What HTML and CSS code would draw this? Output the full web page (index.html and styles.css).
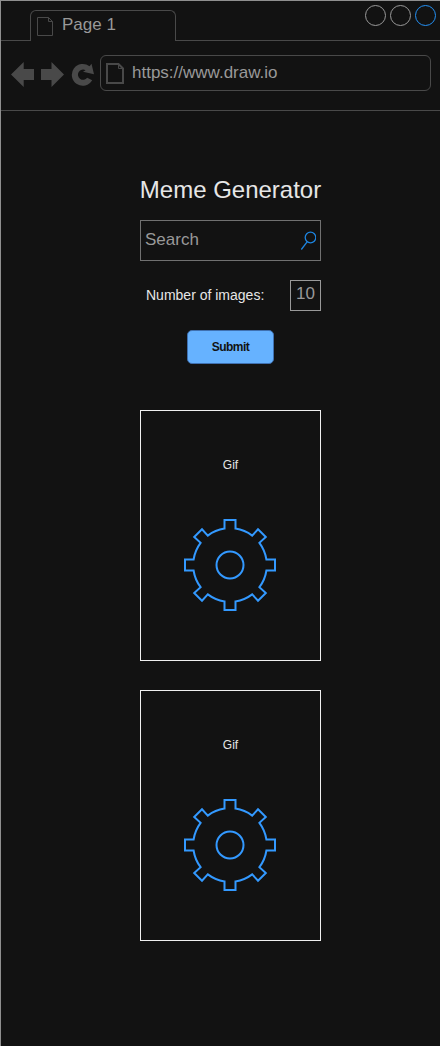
FILE: index.html
```html
<!DOCTYPE html>
<html lang="en">
<head>
<meta charset="utf-8">
<title>Meme Generator</title>
<link rel="stylesheet" href="styles.css">
</head>
<body>
<svg class="defs" width="0" height="0">
  <symbol id="gear" viewBox="-46 -46 93 93">
    <path d="M-5.5-36.4V-45H5.5V-36.4A36.8 36.8 0 0 1 22.2-29.4L28-35.7 35.8-28 29.4-22.2A36.8 36.8 0 0 1 36.4-5.5H45V5.5H36.4A36.8 36.8 0 0 1 29.4 22.2L35.8 28 28 35.7 22.2 29.4A36.8 36.8 0 0 1 5.5 36.4V45H-5.5V36.4A36.8 36.8 0 0 1-22.2 29.4L-28 35.7-35.8 28-29.4 22.2A36.8 36.8 0 0 1-36.4 5.5H-45V-5.5H-36.4A36.8 36.8 0 0 1-29.4-22.2L-35.8-28-28-35.7-22.2-29.4A36.8 36.8 0 0 1-5.5-36.4Z"/>
    <circle r="13.5"/>
  </symbol>
</svg>
<div class="window">
  <header class="tabs">
    <div class="tab-lead"></div>
    <div class="tab">
      <svg class="tab-icon" width="17" height="19" viewBox="0 0 17 19"><path d="M.5.5H11.5L15.5 4.500V18.500H.5ZM11.500.5V4.500H15.500"/></svg>
      <span>Page 1</span>
    </div>
    <div class="controls">
      <span class="dot"></span><span class="dot"></span><span class="dot dot-active"></span>
    </div>
  </header>
  <nav class="toolbar">
    <svg class="nav-icons" width="84" height="26" viewBox="0 0 84 26">
      <path d="M0 12.500 12.700 0V7H23V18H12.700V25Z"/>
      <path d="M30 7H40.500V0L53 12.500 40.500 25V18H30Z"/>
      <path d="M78.500 4.300 80.500 1.700 83 12.200 72 9.800 74.600 8.300A5.100 5.100 0 1 0 76.200 15.700L81.200 18.200A10.900 10.900 0 1 1 78.500 4.300Z"/>
    </svg>
    <div class="address">
      <svg class="page-icon" width="18" height="21" viewBox="0 0 18 21"><path d="M1 1H12.500L17 5.500V20H1Z"/><path class="fold" d="M12.500 1V5.500H17"/></svg>
      <span>https://www.draw.io</span>
    </div>
  </nav>
  <main class="content">
    <h1 class="title">Meme Generator</h1>
    <div class="search">
      <span>Search</span>
      <svg class="search-icon" width="16" height="19" viewBox="0 0 16 19"><path d="M7.300 10.700 1.300 18.500"/><circle cx="10.500" cy="6.500" r="5.300"/></svg>
    </div>
    <div class="count">
      <span>Number of images:</span>
      <span class="number">10</span>
    </div>
    <button class="submit">Submit</button>
    <section class="card">
      <div class="caption">Gif</div>
      <svg class="gear"><use href="#gear"/></svg>
    </section>
    <section class="card">
      <div class="caption">Gif</div>
      <svg class="gear"><use href="#gear"/></svg>
    </section>
  </main>
</div>
</body>
</html>
```

FILE: styles.css
```css
* { box-sizing: border-box; }
body { margin: 0; background: #121212; font-family: "Liberation Sans", Arial, sans-serif; }
.defs { display: block; }
.window { height: 1046px; border-top: 1px solid #8f8f8f; border-left: 1px solid #8f8f8f; overflow: hidden; }
svg { display: block; flex: none; fill: none; }
.tabs { display: flex; height: 40px; }
.tab-lead { width: 29px; border-bottom: 1px solid #494949; }
.tab { display: flex; width: 146px; height: 31px; margin-top: 9px; border: 1px solid #494949; border-bottom: 0; border-radius: 6px 6px 0 0; padding: 5px 0 0 6px; font-size: 17px; line-height: 17px; color: #999; }
.tab-icon { margin: 1px 8px 0 0; stroke: #494949; }
.controls { flex: 1; display: flex; justify-content: flex-end; gap: 4px; padding: 4px 4px 0 0; border-bottom: 1px solid #494949; }
.dot { width: 21px; height: 21px; border: 1px solid #999; border-radius: 50%; }
.dot-active { border-color: #2491f5; }
.toolbar { display: flex; height: 70px; padding: 14px 9px 0 10px; border-bottom: 1px solid #494949; }
.nav-icons { margin: 7px 5px 0 0; fill: #494949; }
.address { flex: 1; display: flex; height: 36px; border: 1px solid #494949; border-radius: 6px; padding: 8px 0 0 5px; color: #999; font-size: 17px; line-height: 18px; }
.page-icon { stroke: #494949; stroke-width: 2; margin: -1px 8px 0 0; }
.fold { stroke-width: 1; }
.content { width: 181px; margin-left: 139px; padding-top: 64px; display: flex; flex-direction: column; align-items: center; }
.title { margin: 0; font-size: 24px; line-height: 30px; font-weight: 400; color: #e6e6e6; white-space: nowrap; }
.search { display: flex; justify-content: space-between; width: 181px; height: 41px; margin-top: 15px; border: 1px solid #707070; padding: 10px 4px 0; font-size: 17px; line-height: 18px; color: #999; }
.search-icon { stroke: #1d84df; stroke-width: 1.3; }
.count { display: flex; justify-content: space-between; width: 181px; height: 31px; margin-top: 19px; padding-left: 6px; font-size: 14px; line-height: 31px; color: #e6e6e6; }
.number { width: 31px; border: 1px solid #999; font-size: 17px; line-height: 26px; text-align: center; color: #999; }
.submit { width: 87px; height: 34px; margin: 19px 0 0; padding: 0; border: 1px solid #3f70b0; border-radius: 5px; background: #66b2ff; color: #121212; font: bold 12px "Liberation Sans", Arial, sans-serif; letter-spacing: -0.5px; }
.card { display: flex; flex-direction: column; align-items: center; width: 181px; height: 251px; margin-top: 29px; border: 1px solid #f0f0f0; }
.submit + .card { margin-top: 46px; }
.caption { margin-top: 46px; font-size: 12px; line-height: 16px; color: #e6e6e6; }
.gear { width: 93px; height: 93px; margin-top: 46px; stroke: #3399ff; stroke-width: 2; }
```
